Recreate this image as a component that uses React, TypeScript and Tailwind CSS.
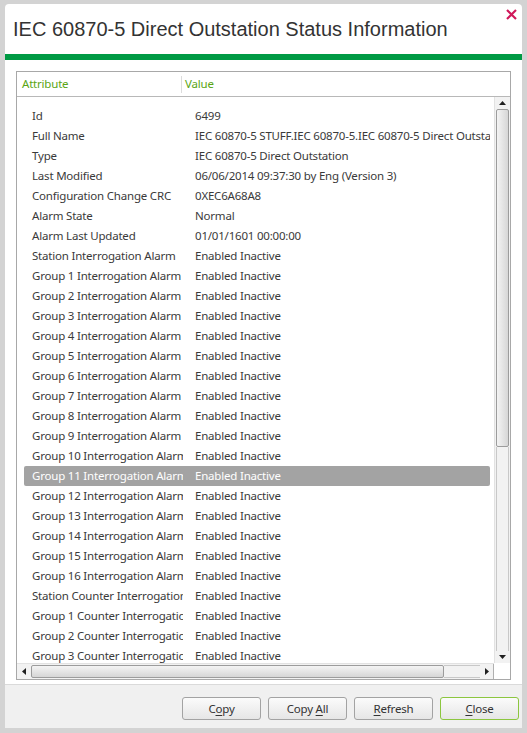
import React from "react";

const ROWS: [string, string][] = [
  ["Id", "6499"],
  ["Full Name", "IEC 60870-5 STUFF.IEC 60870-5.IEC 60870-5 Direct Outstation"],
  ["Type", "IEC 60870-5 Direct Outstation"],
  ["Last Modified", "06/06/2014 09:37:30 by Eng (Version 3)"],
  ["Configuration Change CRC", "0XEC6A68A8"],
  ["Alarm State", "Normal"],
  ["Alarm Last Updated", "01/01/1601 00:00:00"],
  ["Station Interrogation Alarm", "Enabled Inactive"],
  ...Array.from({ length: 16 }, (_, i): [string, string] => [
    `Group ${i + 1} Interrogation Alarm`,
    "Enabled Inactive",
  ]),
  ["Station Counter Interrogation Alarm", "Enabled Inactive"],
  ["Group 1 Counter Interrogation Alarm", "Enabled Inactive"],
  ["Group 2 Counter Interrogation Alarm", "Enabled Inactive"],
  ["Group 3 Counter Interrogation Alarm", "Enabled Inactive"],
  ["Group 4 Counter Interrogation Alarm", "Enabled Inactive"],
];

const SELECTED = 18;

function Arrow({ dir }: { dir: "up" | "down" | "left" | "right" }) {
  const pts = {
    up: "0,4 7,4 3.5,0",
    down: "0,0 7,0 3.5,4",
    left: "4,0 4,7 0,3.5",
    right: "0,0 0,7 4,3.5",
  }[dir];
  const vert = dir === "up" || dir === "down";
  return (
    <svg width={vert ? 7 : 4} height={vert ? 4 : 7} viewBox={vert ? "0 0 7 4" : "0 0 4 7"}>
      <polygon points={pts} fill="#202020" />
    </svg>
  );
}

function Btn({ pre, u, post, primary }: { pre: string; u: string; post: string; primary?: boolean }) {
  return (
    <button
      className={`w-[79px] h-[23px] rounded-[3px] border text-[11.5px] tracking-[-0.2px] text-[#333] bg-gradient-to-b from-[#fbfbfb] to-[#e6e6e6] ${
        primary ? "border-[#8cc63f]" : "border-[#a3a3a3]"
      }`}
    >
      {pre}
      <span className="underline underline-offset-2">{u}</span>
      {post}
    </button>
  );
}

export default function App() {
  return (
    <div
      className="w-[527px] h-[733px] bg-[#d3d3d3] pt-[4px] pl-[5px] overflow-hidden"
      style={{ fontFamily: '"Noto Sans", "Open Sans", sans-serif' }}
    >
      <div className="w-[517px] h-[724px] bg-white rounded-t-[4px] flex flex-col relative">
        {/* Title */}
        <div className="h-[50px] flex items-center pl-[8px]">
          <h1
            className="text-[20px] text-[#333] leading-none"
            style={{ fontFamily: '"Liberation Sans", Arial, sans-serif' }}
          >
            IEC 60870-5 Direct Outstation Status Information
          </h1>
        </div>
        <button className="absolute right-[5px] top-[4px] w-[12px] h-[12px] flex items-center justify-center">
          <svg width="11" height="11" viewBox="0 0 11 11">
            <path d="M1 1 L10 10 M10 1 L1 10" stroke="#d0185a" strokeWidth="2.2" />
          </svg>
        </button>
        <div className="h-[6px] bg-[#009a44]" />

        {/* Table */}
        <div className="px-[11px] pt-[11px] pb-[4px]">
          <div className="w-[495px] h-[609px] border border-[#a8a8a8] flex flex-col">
            <div className="h-[25px] border-b border-[#b8b8b8] flex items-center text-[11.5px] tracking-[-0.2px] text-[#5aa514] shrink-0">
              <div className="w-[164px] pl-[5px]">Attribute</div>
              <div className="w-px h-[17px] bg-[#dcdcdc]" />
              <div className="pl-[3px]">Value</div>
            </div>
            <div className="flex h-[566px] shrink-0">
              <div className="w-[477px] overflow-hidden pt-[9px]">
                {ROWS.map(([k, v], i) => (
                  <div
                    key={k}
                    className={`ml-[7px] w-[466px] h-[20px] flex items-center text-[11.5px] tracking-[-0.2px] whitespace-nowrap overflow-hidden rounded-[2px] ${
                      i === SELECTED ? "bg-[#a3a3a3] text-white" : "text-[#3a3a3a]"
                    }`}
                  >
                    <div className="w-[159px] pl-[8px] overflow-hidden shrink-0">{k}</div>
                    <div className="pl-[12px]">{v}</div>
                  </div>
                ))}
              </div>
              {/* vertical scrollbar */}
              <div className="w-[16px] flex flex-col bg-[#f2f2f2] border-l border-[#e2e2e2]">
                <div className="h-[12px] flex items-center justify-center">
                  <Arrow dir="up" />
                </div>
                <div className="mx-[1px] h-[338px] rounded-[2px] border border-[#9c9c9c] bg-gradient-to-r from-[#f4f4f4] to-[#d6d6d6]" />
                <div className="flex-1 mx-[1px] border-x border-[#c8c8c8]" />
                <div className="h-[12px] flex items-center justify-center">
                  <Arrow dir="down" />
                </div>
              </div>
            </div>
            {/* horizontal scrollbar */}
            <div className="flex h-[16px] shrink-0">
              <div className="w-[477px] flex bg-[#f2f2f2] border-t border-[#e2e2e2]">
                <div className="w-[14px] flex items-center justify-center">
                  <Arrow dir="left" />
                </div>
                <div className="w-[413px] my-[1px] rounded-[2px] border border-[#9c9c9c] bg-gradient-to-b from-[#f4f4f4] to-[#d6d6d6]" />
                <div className="flex-1 my-[1px] border-y border-[#c8c8c8]" />
                <div className="w-[14px] flex items-center justify-center border-r border-[#b0b0b0]">
                  <Arrow dir="right" />
                </div>
              </div>
              <div className="flex-1 bg-white" />
            </div>
          </div>
        </div>

        {/* Footer */}
        <div className="flex-1 bg-[#f0f0f0] border-t border-[#dadada] flex justify-end items-start gap-[7px] pt-[12px] pr-[3px]">
          <Btn pre="C" u="o" post="py" />
          <Btn pre="Copy " u="A" post="ll" />
          <Btn pre="" u="R" post="efresh" />
          <Btn pre="" u="C" post="lose" primary />
        </div>
      </div>
    </div>
  );
}
